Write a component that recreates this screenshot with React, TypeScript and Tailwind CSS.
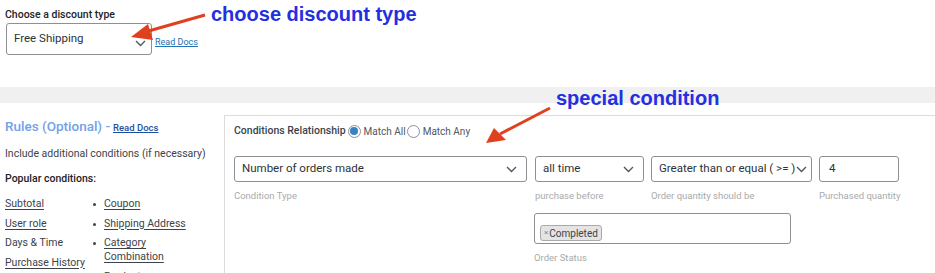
import React from "react";

const Chevron = () => (
  <svg width="11" height="7" viewBox="0 0 11 7" className="shrink-0">
    <polyline points="1,1 5.5,5.5 10,1" fill="none" stroke="#50575e" strokeWidth="1.4" />
  </svg>
);

const Select = ({ text, w, pad = "pr-[9px]" }: { text: string; w: string; pad?: string }) => (
  <div className={`${w} h-[26px] border border-[#8c8f94] rounded-[3px] bg-white flex items-center justify-between pl-[7px] ${pad} text-[11.5px] text-[#2c3338]`}>
    <span className="whitespace-nowrap">{text}</span>
    <Chevron />
  </div>
);

const Bullet = () => <span className="w-[3px] h-[3px] rounded-full bg-[#3c434a] mt-[6px] shrink-0" />;

const Hint = ({ children }: { children: React.ReactNode }) => (
  <span className="mt-[7px] text-[9.5px] leading-[14px] text-[#a7aaad] whitespace-nowrap">{children}</span>
);

export default function App() {
  return (
    <div className="relative w-[935px] h-[273px] overflow-hidden bg-white text-[#2c3338]" style={{ fontFamily: "Roboto, 'Liberation Sans', sans-serif" }}>
      {/* top section */}
      <div className="h-[87px] pl-[5px] pt-[8px]">
        <div className="text-[10.5px] font-medium leading-[14px] text-[#1d2327]">Choose a discount type</div>
        <div className="flex items-end mt-[1px]">
          <div className="w-[146px] h-[32px] ml-[1px] border border-[#8c8f94] rounded-[3px] flex items-center justify-between pl-[7px] pr-[5px] text-[11.5px] text-[#2c3338]">
            <span>Free Shipping</span>
            <span className="mt-[8px]"><Chevron /></span>
          </div>
          <a className="ml-[3px] mb-[7px] text-[9px] leading-[12px] text-[#2271b1] underline">Read Docs</a>
        </div>
      </div>
      {/* gray band */}
      <div className="h-[16px] bg-[#f0f0f1]" />
      {/* lower */}
      <div className="flex">
        <div className="w-[224px] pl-[5px] pt-[13px] shrink-0">
          <div className="flex items-baseline leading-[20px]">
            <span className="text-[13.5px] font-medium text-[#72a1e8]">Rules (Optional) -</span>
            <a className="ml-[3px] text-[9.5px] font-medium text-[#1f4ea0] underline">Read Docs</a>
          </div>
          <div className="mt-[8px] text-[10.5px] leading-[16px] text-[#3c434a]">Include additional conditions (if necessary)</div>
          <div className="mt-[9px] text-[10.5px] leading-[16px] font-medium text-[#1d2327]">Popular conditions:</div>
          <div className="flex mt-[10px] text-[10.5px] leading-[14px] text-[#3c434a]">
            <div className="w-[88px] flex flex-col gap-[5.5px]">
              <span className="underline underline-offset-2">Subtotal</span>
              <span className="underline underline-offset-2">User role</span>
              <span>Days &amp; Time</span>
              <span className="underline underline-offset-2 whitespace-nowrap">Purchase History</span>
            </div>
            <div className="flex flex-col gap-[5.5px]">
              <div className="flex gap-[8px]"><Bullet /><span className="underline underline-offset-2 whitespace-nowrap">Coupon</span></div>
              <div className="flex gap-[8px]"><Bullet /><span className="underline underline-offset-2 whitespace-nowrap">Shipping Address</span></div>
              <div className="flex gap-[8px]"><Bullet /><span className="underline underline-offset-2 w-[90px]">Category Combination</span></div>
              <div className="flex gap-[8px]"><Bullet /><span className="underline underline-offset-2">Products</span></div>
            </div>
          </div>
        </div>
        <div className="flex-1 mt-[12px] border-t border-l border-[#dcdcde] pl-[9px] pt-[8px]">
          <div className="flex items-center h-[14px]">
            <span className="text-[10.5px] font-medium text-[#3c434a] mr-[2px]">Conditions Relationship</span>
            <span className="w-[13px] h-[13px] rounded-full border border-[#8c8f94] flex items-center justify-center">
              <span className="w-[8px] h-[8px] rounded-full bg-[#3582c4]" />
            </span>
            <span className="ml-[3px] text-[10px] text-[#50575e]">Match All</span>
            <span className="ml-[1px] w-[13px] h-[13px] rounded-full border border-[#8c8f94]" />
            <span className="ml-[3px] text-[10px] text-[#50575e]">Match Any</span>
          </div>
          <div className="flex mt-[18px]">
            <div className="flex flex-col">
              <Select text="Number of orders made" w="w-[293px]" />
              <Hint>Condition Type</Hint>
            </div>
            <div className="flex flex-col ml-[8px]">
              <Select text="all time" w="w-[109px]" />
              <Hint>purchase before</Hint>
            </div>
            <div className="flex flex-col ml-[7px]">
              <Select text="Greater than or equal ( >= )" w="w-[161px]" pad="pr-[4px]" />
              <Hint>Order quantity should be</Hint>
            </div>
            <div className="flex flex-col ml-[7px]">
              <div className="w-[80px] h-[26px] border border-[#8c8f94] rounded-[3px] flex items-center pl-[9px] text-[11.5px] text-[#2c3338]">4</div>
              <Hint>Purchased quantity</Hint>
            </div>
          </div>
          <div className="flex flex-col ml-[300px]">
            <div className="mt-[10px] w-[257px] h-[31px] border border-[#8c8f94] rounded-[3px] pl-[5px] pt-[4px]">
              <span className="inline-flex items-center h-[16px] px-[3px] bg-[#e4e4e4] border border-[#aaa] rounded-[3px] text-[10px] text-[#3c434a]">
                <span className="text-[8px] text-[#888] mr-[1px]">×</span>Completed
              </span>
            </div>
            <Hint>Order Status</Hint>
          </div>
        </div>
      </div>

      {/* annotations */}
      <div className="absolute left-[211px] top-[1px] text-[20px] font-bold text-[#2430e0] leading-[26px]" style={{ fontFamily: "'Liberation Sans', Arial, sans-serif" }}>choose discount type</div>
      <div className="absolute left-[556px] top-[85px] text-[20px] font-bold text-[#2430e0] leading-[26px]" style={{ fontFamily: "'Liberation Sans', Arial, sans-serif" }}>special condition</div>
      <svg className="absolute left-0 top-0" width="935" height="273">
        <line x1="205" y1="15" x2="145" y2="32" stroke="#e0401e" strokeWidth="3" />
        <polygon points="131,37 148,24 153,40" fill="#e0401e" />
        <line x1="550" y1="108" x2="500" y2="134" stroke="#e0401e" strokeWidth="3" />
        <polygon points="486,143 494,128 506,140" fill="#e0401e" />
      </svg>
    </div>
  );
}
